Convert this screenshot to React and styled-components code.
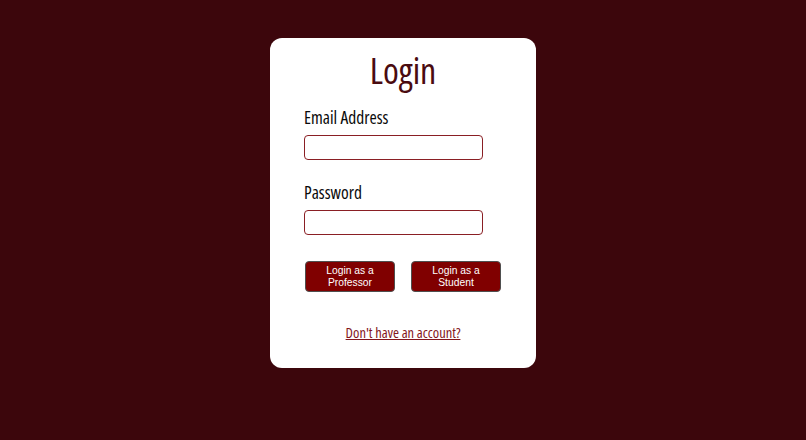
import React from "react";
import styled, { createGlobalStyle } from "styled-components";

const Global = createGlobalStyle`
  html, body { margin: 0; padding: 0; background: #3c060c; }
  body { font-family: "DejaVu Sans", sans-serif; }
`;

const Page = styled.div`
  width: 806px;
  height: 440px;
  display: flex;
  justify-content: center;
  align-items: flex-start;
  padding-top: 38px;
  box-sizing: border-box;
`;

const Card = styled.div`
  width: 266px;
  height: 330px;
  background: #ffffff;
  border-radius: 12px;
  box-sizing: border-box;
  padding: 14px 34px 0;
  display: flex;
  flex-direction: column;
  font-family: "Open Sans", sans-serif;
  font-stretch: 75%;
`;

const Title = styled.h1`
  margin: 0;
  text-align: center;
  font-size: 36px;
  font-weight: 400;
  line-height: 38px;
  color: #4a0b10;
`;

const Label = styled.label`
  display: block;
  font-size: 17.5px;
  line-height: 22px;
  color: #0a0a0a;
  margin-top: ${(p) => p.$top}px;
`;

const Input = styled.input`
  display: block;
  width: 179px;
  height: 25px;
  box-sizing: border-box;
  margin-top: 7px;
  border: 1.5px solid #8a1f24;
  border-radius: 4px;
  background: #fff;
  outline: none;
`;

const Buttons = styled.div`
  display: flex;
  gap: 16px;
  margin-top: 26px;
  padding-left: 1px;
`;

const Button = styled.button`
  width: 90px;
  height: 31px;
  box-sizing: border-box;
  background: #800000;
  color: #fff;
  border: 1px solid #4f4f4f;
  border-radius: 4px;
  font-family: "Liberation Sans", Arial, sans-serif;
  font-stretch: normal;
  font-size: 10.3px;
  line-height: 11.5px;
  padding: 0 4px;
  cursor: pointer;
`;

const Link = styled.a`
  display: block;
  text-align: center;
  margin-top: 32px;
  font-size: 14.5px;
  line-height: 18px;
  color: #84161c;
  text-decoration: underline;
`;

export default function App() {
  return (
    <>
      <Global />
      <Page>
        <Card>
          <Title>Login</Title>
          <Label $top={16}>Email Address</Label>
          <Input type="email" />
          <Label $top={21}>Password</Label>
          <Input type="password" />
          <Buttons>
            <Button>Login as a Professor</Button>
            <Button>Login as a Student</Button>
          </Buttons>
          <Link href="#">Don't have an account?</Link>
        </Card>
      </Page>
    </>
  );
}
